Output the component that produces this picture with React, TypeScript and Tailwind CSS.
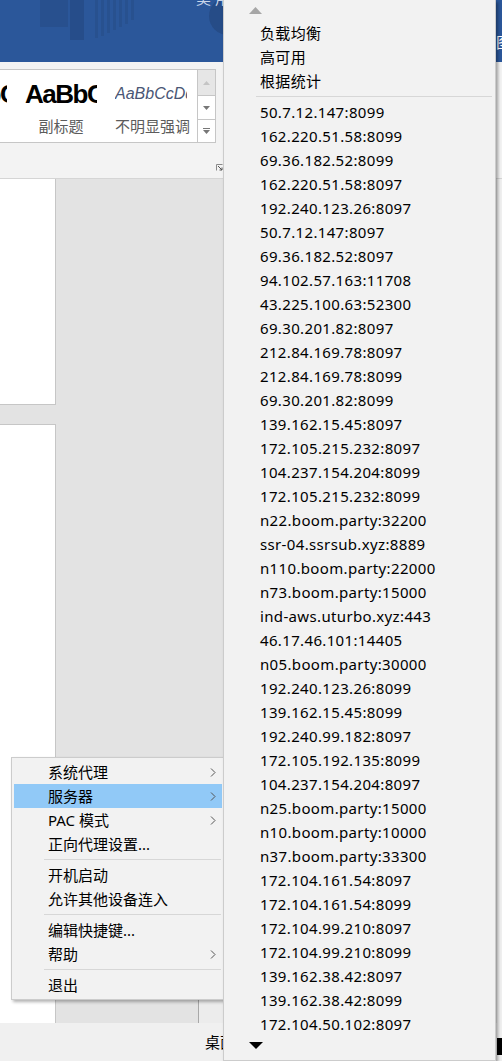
const servers = [
  '50.7.12.147:8099',
  '162.220.51.58:8099',
  '69.36.182.52:8099',
  '162.220.51.58:8097',
  '192.240.123.26:8097',
  '50.7.12.147:8097',
  '69.36.182.52:8097',
  '94.102.57.163:11708',
  '43.225.100.63:52300',
  '69.30.201.82:8097',
  '212.84.169.78:8097',
  '212.84.169.78:8099',
  '69.30.201.82:8099',
  '139.162.15.45:8097',
  '172.105.215.232:8097',
  '104.237.154.204:8099',
  '172.105.215.232:8099',
  'n22.boom.party:32200',
  'ssr-04.ssrsub.xyz:8889',
  'n110.boom.party:22000',
  'n73.boom.party:15000',
  'ind-aws.uturbo.xyz:443',
  '46.17.46.101:14405',
  'n05.boom.party:30000',
  '192.240.123.26:8099',
  '139.162.15.45:8099',
  '192.240.99.182:8097',
  '172.105.192.135:8099',
  '104.237.154.204:8097',
  'n25.boom.party:15000',
  'n10.boom.party:10000',
  'n37.boom.party:33300',
  '172.104.161.54:8097',
  '172.104.161.54:8099',
  '172.104.99.210:8097',
  '172.104.99.210:8099',
  '139.162.38.42:8097',
  '139.162.38.42:8099',
  '172.104.50.102:8097',
];

function Chevron() {
  return (
    <svg width="6" height="9" viewBox="0 0 6 9" className="shrink-0">
      <polyline points="1,0.5 5,4.5 1,8.5" fill="none" stroke="#555" strokeWidth="1" />
    </svg>
  );
}

function MenuItem({ label, arrow, active }: { label: string; arrow?: boolean; active?: boolean }) {
  return (
    <div
      className={`h-[24px] mx-[2px] pl-[34px] pr-[6px] flex items-center justify-between leading-[24px] whitespace-nowrap ${
        active ? 'bg-[#91c9f7]' : ''
      }`}
    >
      <span>{label}</span>
      {arrow && <Chevron />}
    </div>
  );
}

function Separator() {
  return (
    <div className="h-[7px] pl-[32px] pr-[3px] flex items-center">
      <div className="h-px w-full bg-[#d7d7d7]" />
    </div>
  );
}

function TitleDecor() {
  // darker blue shapes in the Word title bar
  return (
    <svg width="223" height="62" viewBox="0 0 223 62" className="absolute left-0 top-0">
      <path d="M40 0 H68 V27 H40 Z" fill="#28508e" />
      <rect x="70" y="0" width="14" height="40" fill="#264d8a" />
      <rect x="95" y="0" width="3" height="38" fill="#28518f" />
      <rect x="101" y="0" width="3" height="36" fill="#28518f" />
      <rect x="107" y="0" width="3" height="33" fill="#28518f" />
      <rect x="113" y="0" width="3" height="30" fill="#28518f" />
      <rect x="119" y="0" width="3" height="27" fill="#28518f" />
      <rect x="125" y="0" width="3" height="24" fill="#28518f" />
      <rect x="131" y="0" width="3" height="20" fill="#28518f" />
      <circle cx="228" cy="16" r="19" fill="#264c87" />
    </svg>
  );
}

export default function App() {
  return (
    <div className="relative w-[502px] h-[1061px] overflow-hidden bg-[#e3e3e3] text-black font-['Noto_Sans','Noto_Sans_CJK_SC',sans-serif] text-[15px]">
      {/* Word window underneath */}
      <div className="flex flex-col h-full">
        {/* title bar */}
        <div className="relative h-[62px] bg-[#2b579a] shrink-0 overflow-hidden">
          <TitleDecor />
          <div className="relative flex">
            <span className="ml-[196px] -mt-[12px] text-[#c9d6ea] leading-[20px]">美 用</span>
            <span className="ml-auto mt-[32px] mr-[-9px] text-white leading-[20px]">图</span>
          </div>
        </div>

        {/* ribbon */}
        <div className="h-[117px] shrink-0 bg-[#f3f3f3] border-b border-[#d5d5d5] flex flex-col">
          <div className="mt-[7px] h-[74px] w-[216px] bg-white border border-l-0 border-[#c6c6c6] flex overflow-hidden">
            <div className="flex-1 flex overflow-hidden">
              <div className="shrink-0 w-[87px] ml-[-71px] px-[9px] flex flex-col">
                <div className="overflow-hidden h-[48px] pt-[1px] flex items-center whitespace-nowrap font-['Liberation_Sans',sans-serif] font-bold text-[26px] tracking-[-1.5px]">
                  AaBbC
                </div>
              </div>
              <div className="shrink-0 w-[90px] px-[9px] flex flex-col">
                <div className="overflow-hidden h-[48px] pt-[1px] flex items-center whitespace-nowrap font-['Liberation_Sans',sans-serif] font-bold text-[26px] tracking-[-1.5px]">
                  AaBbC
                </div>
                <div className="text-center text-[#5c5c5c] leading-[16px]">副标题</div>
              </div>
              <div className="shrink-0 w-[90px] px-[9px] flex flex-col">
                <div className="overflow-hidden h-[48px] flex items-center whitespace-nowrap font-['Liberation_Sans',sans-serif] italic text-[16px] text-[#4a5675]">
                  AaBbCcDd
                </div>
                <div className="text-center text-[#5c5c5c] leading-[16px] whitespace-nowrap">不明显强调</div>
              </div>
            </div>
            {/* gallery scroll buttons */}
            <div className="w-[18px] shrink-0 border-l border-[#c6c6c6] flex flex-col">
              <div className="h-[26px] bg-[#e6e6e6] border-b border-[#c6c6c6] flex items-center justify-center">
                <svg width="7" height="4" viewBox="0 0 7 4">
                  <polygon points="0,4 7,4 3.5,0" fill="#c4c4c4" />
                </svg>
              </div>
              <div className="h-[24px] border-b border-[#c6c6c6] flex items-center justify-center">
                <svg width="7" height="4" viewBox="0 0 7 4">
                  <polygon points="0,0 7,0 3.5,4" fill="#777" />
                </svg>
              </div>
              <div className="flex-1 flex flex-col items-center justify-center gap-[1px]">
                <div className="w-[7px] h-px bg-[#777]" />
                <svg width="7" height="4" viewBox="0 0 7 4">
                  <polygon points="0,0 7,0 3.5,4" fill="#777" />
                </svg>
              </div>
            </div>
          </div>
          <div className="mt-auto mb-[7px] ml-[216px] w-[7px] h-[7px]">
            <svg width="7" height="7" viewBox="0 0 7 7">
              <path d="M0.5 6.5 V0.5 H6.5" fill="none" stroke="#8a8a8a" />
              <path d="M2 2 L6 6 M6 3.5 V6 H3.5" fill="none" stroke="#555" />
            </svg>
          </div>
        </div>

        {/* document area */}
        <div className="flex-1 flex min-h-0">
          <div className="w-[56px] shrink-0 flex flex-col">
            <div className="h-[226px] bg-white border-r border-b border-[#c6c6c6]" />
            <div className="flex-1 mt-[19px] bg-white border-r border-t border-[#c6c6c6]" />
          </div>
          <div className="flex-1 flex flex-col justify-end">
            <div className="ml-[142px] w-[30px] h-[25px] bg-[#ececec] border-l border-t border-[#a8a8a8]" />
          </div>
          <div className="w-[5px] shrink-0 bg-[#f0f0f0]" />
        </div>

        {/* status bar */}
        <div className="h-[38px] shrink-0 bg-[#f0f0f0] flex items-center">
          <span className="ml-[205px] leading-[20px]">桌面</span>
          <div className="ml-auto mt-[9px] w-[5px] h-[17px] bg-black" />
        </div>
      </div>

      {/* tray context menu */}
      <div className="absolute left-[11px] top-[757px] w-[214px] bg-[#f2f2f2] border border-[#cccccc] shadow-[2px_2px_3px_rgba(0,0,0,0.3)] pt-[2px] pb-[2px]">
        <MenuItem label="系统代理" arrow />
        <MenuItem label="服务器" arrow active />
        <MenuItem label="PAC 模式" arrow />
        <MenuItem label="正向代理设置..." />
        <Separator />
        <MenuItem label="开机启动" />
        <MenuItem label="允许其他设备连入" />
        <Separator />
        <MenuItem label="编辑快捷键..." />
        <MenuItem label="帮助" arrow />
        <Separator />
        <MenuItem label="退出" />
      </div>

      {/* servers submenu */}
      <div className="absolute left-[223px] top-0 w-[273px] h-[1061px] bg-[#f2f2f2] border-x border-b border-[#cccccc] shadow-[2px_2px_3px_rgba(0,0,0,0.35)] flex flex-col tracking-[0.35px]">
        <div className="h-[21px] shrink-0 pl-[25px] flex items-center">
          <svg width="13" height="7" viewBox="0 0 13 7">
            <polygon points="0,7 13,7 6.5,0" fill="#a6a6a6" />
          </svg>
        </div>
        <MenuItem label="负载均衡" />
        <MenuItem label="高可用" />
        <MenuItem label="根据统计" />
        <Separator />
        {servers.map((s, i) => (
          <MenuItem key={i} label={s} />
        ))}
        <div className="h-[21px] shrink-0 pl-[25px] pt-[6px] flex items-start">
          <svg width="14" height="7" viewBox="0 0 14 7">
            <polygon points="0,0 14,0 7,7" fill="#000" />
          </svg>
        </div>
      </div>
    </div>
  );
}
